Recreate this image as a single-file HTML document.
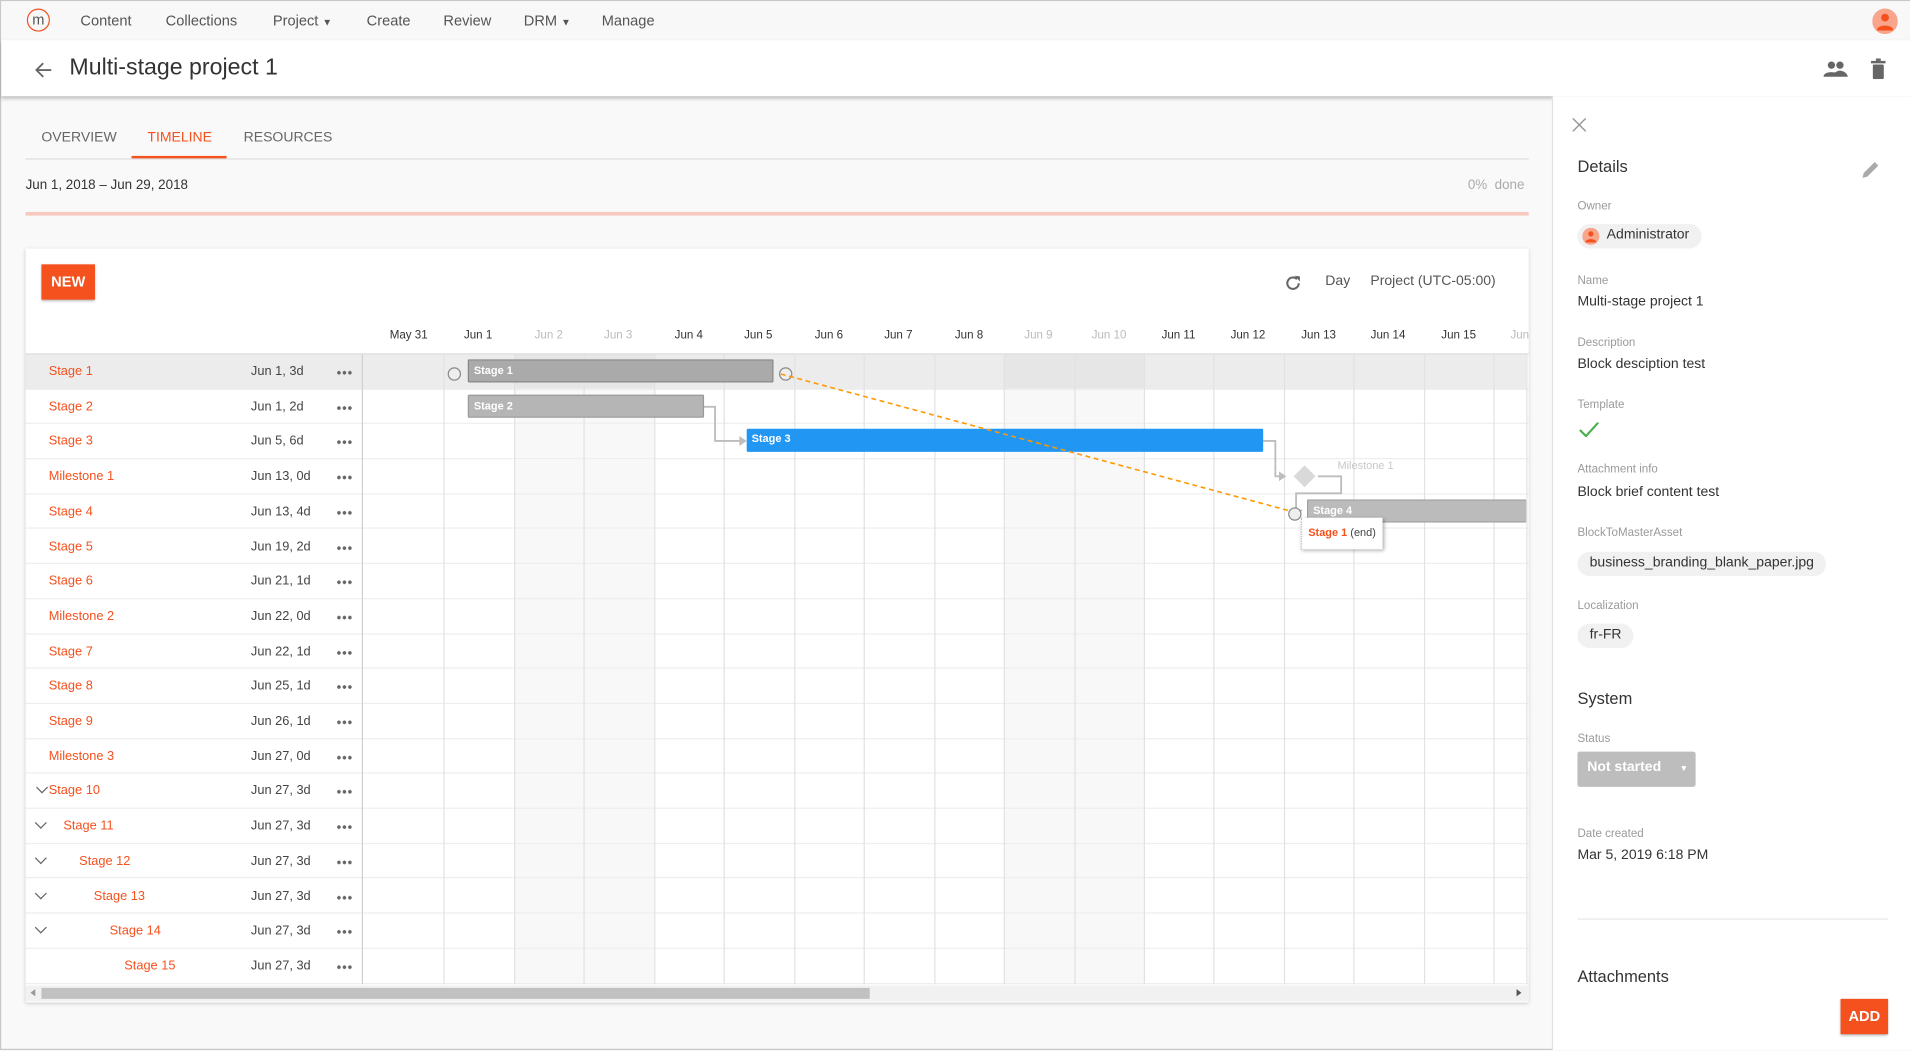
<!DOCTYPE html>
<html><head><meta charset="utf-8">
<style>
*{box-sizing:border-box;margin:0;padding:0}
html,body{width:1910px;height:1050px;overflow:hidden;background:#f9f9f9}
#w{position:absolute;left:0;top:0;width:1568px;height:862px;transform:scale(1.21811);transform-origin:0 0;font-family:"Liberation Sans",sans-serif;color:#333;background:#f9f9f9;border:1px solid #c8c8c8}
.a{position:absolute;white-space:nowrap}
.nav{font-size:12px;color:#555;top:9px}
.row{position:absolute;left:20px;width:1234px;height:28.7px;border-bottom:1px solid #eee}
.nm{position:absolute;top:8px;font-size:10.5px;color:#f4511e}
.dt{position:absolute;left:185px;top:8px;font-size:10.5px;color:#444}
.dots{position:absolute;left:255px;top:13px;width:13px;height:4px;background:radial-gradient(circle,#666 1.4px,transparent 1.6px) 0 0/4.5px 4px repeat-x}
.chev{position:absolute;left:9px;top:8px;width:7px;height:7px;border-right:1.6px solid #666;border-bottom:1.6px solid #666;transform:rotate(45deg)}
.lbl{position:absolute;left:1294px;font-size:9.5px;color:#9a9a9a}
.val{position:absolute;left:1294px;font-size:11.5px;color:#333}
.chip{position:absolute;left:1294px;height:20px;border-radius:10px;background:#f1f1f1;font-size:11.5px;padding:3px 10px;color:#333}
.dh{position:absolute;top:269px;font-size:9.5px;color:#333;width:57px;text-align:center}
.dh.g{color:#bbb}
.bar{position:absolute;height:19px;font-size:9px;font-weight:bold;color:#fff;padding:3px 4px;border-radius:1px}
</style></head><body><div id="w">
<div class="a" style="left:0;top:0;width:1568px;height:32px;background:#f8f8f8"></div>
<div class="a" style="left:21px;top:6px;width:19px;height:19px;border:1.3px solid #f4511e;border-radius:50%;font-size:12px;color:#555;text-align:center;line-height:16px">m</div>
<div class="a nav" style="left:65px">Content</div>
<div class="a nav" style="left:135px">Collections</div>
<div class="a nav" style="left:223px">Project <span style="font-size:8px">▼</span></div>
<div class="a nav" style="left:300px">Create</div>
<div class="a nav" style="left:363px">Review</div>
<div class="a nav" style="left:429px">DRM <span style="font-size:8px">▼</span></div>
<div class="a nav" style="left:493px">Manage</div>
<svg class="a" style="left:1536px;top:6px" width="21" height="21" viewBox="0 0 21 21"><circle cx="10.5" cy="10.5" r="10.5" fill="#f8a58c"/><circle cx="10.5" cy="7.5" r="3.2" fill="#f4511e"/><path d="M4 17c1-4 12-4 13 0v1H4z" fill="#f4511e"/></svg>
<div class="a" style="left:0;top:32px;width:1568px;height:46px;background:#fff;box-shadow:0 2px 3px rgba(0,0,0,.25)"></div>
<svg class="a" style="left:27px;top:49px" width="15" height="15" viewBox="0 0 16 16"><path d="M15 8H2M8 2L2 8l6 6" stroke="#666" stroke-width="1.6" fill="none"/></svg>
<div class="a" style="left:56px;top:44px;font-size:19px;color:#333">Multi-stage project 1</div>
<svg class="a" style="left:1495px;top:48px" width="22" height="16" viewBox="0 0 22 16"><circle cx="7.5" cy="4.5" r="3" fill="#666"/><circle cx="14.5" cy="4.5" r="3" fill="#666"/><path d="M1 14c0-5 13-5 13 0zM9 14c0-3 3-5 5.5-5s6 2 6.5 5z" fill="#666"/></svg>
<svg class="a" style="left:1535px;top:47px" width="12" height="17" viewBox="0 0 12 17"><rect x="0" y="2" width="12" height="2" fill="#666"/><rect x="4" y="0" width="4" height="2" fill="#666"/><rect x="1.5" y="5" width="9" height="12" rx="1" fill="#666"/></svg>
<div class="a" style="left:33px;top:106px;font-size:11.5px;color:#666">OVERVIEW</div>
<div class="a" style="left:120px;top:106px;font-size:11.5px;color:#f4511e">TIMELINE</div>
<div class="a" style="left:199px;top:106px;font-size:11.5px;color:#666">RESOURCES</div>
<div class="a" style="left:20px;top:129px;width:1234px;height:1px;background:#ddd"></div>
<div class="a" style="left:107px;top:127px;width:78px;height:2px;background:#f4511e"></div>
<div class="a" style="left:20px;top:145px;font-size:11px;color:#333">Jun 1, 2018 – Jun 29, 2018</div>
<div class="a" style="left:1204px;top:145px;font-size:11px;color:#aaa">0%&nbsp; done</div>
<div class="a" style="left:20px;top:173px;width:1234px;height:3px;background:#f5c9bd"></div>
<div class="a" style="left:20px;top:203px;width:1234px;height:619px;background:#fff;box-shadow:0 1px 3px rgba(0,0,0,.2)"></div>
<div class="a" style="left:33px;top:216px;width:44px;height:29px;background:#f4511e;color:#fff;font-weight:bold;font-size:12px;text-align:center;line-height:29px;box-shadow:0 1px 2px rgba(0,0,0,.3)">NEW</div>
<svg class="a" style="left:1053px;top:224px" width="15" height="15" viewBox="0 0 16 16"><path d="M13 8a5 5 0 1 1-1.5-3.6" stroke="#666" stroke-width="1.8" fill="none"/><path d="M9.5 1.5L14 2v4.5z" fill="#666"/></svg>
<div class="a" style="left:1087px;top:224px;font-size:11.5px;color:#555">Day</div>
<div class="a" style="left:1124px;top:224px;font-size:11.5px;color:#555">Project (UTC-05:00)</div>
<div class="a" style="left:421px;top:290px;width:115px;height:517px;background:#f8f8f8"></div>
<div class="a" style="left:823px;top:290px;width:115px;height:517px;background:#f8f8f8"></div>
<div class="a" style="left:20px;top:289px;width:1234px;height:1px;background:#ddd"></div>
<div class="a" style="left:20px;top:290px;width:1232px;height:28.7px;background:#ececec"></div>
<div class="a" style="left:421px;top:290px;width:115px;height:28.7px;background:#e6e6e6"></div>
<div class="a" style="left:823px;top:290px;width:115px;height:28.7px;background:#e6e6e6"></div>
<div class="dh" style="left:306px">May 31</div>
<div class="dh" style="left:363px">Jun 1</div>
<div class="dh g" style="left:421px">Jun 2</div>
<div class="dh g" style="left:478px">Jun 3</div>
<div class="dh" style="left:536px">Jun 4</div>
<div class="dh" style="left:593px">Jun 5</div>
<div class="dh" style="left:651px">Jun 6</div>
<div class="dh" style="left:708px">Jun 7</div>
<div class="dh" style="left:766px">Jun 8</div>
<div class="dh g" style="left:823px">Jun 9</div>
<div class="dh g" style="left:881px">Jun 10</div>
<div class="dh" style="left:938px">Jun 11</div>
<div class="dh" style="left:995px">Jun 12</div>
<div class="dh" style="left:1053px">Jun 13</div>
<div class="dh" style="left:1110px">Jun 14</div>
<div class="dh" style="left:1168px">Jun 15</div>
<div class="dh g" style="left:1225px;width:29px;overflow:hidden;text-align:left;padding-left:14px">Jun</div>
<div class="row" style="top:290px"><span class="nm" style="left:19px">Stage 1</span><span class="dt">Jun 1, 3d</span><span class="dots"></span></div>
<div class="row" style="top:318.7px"><span class="nm" style="left:19px">Stage 2</span><span class="dt">Jun 1, 2d</span><span class="dots"></span></div>
<div class="row" style="top:347.4px"><span class="nm" style="left:19px">Stage 3</span><span class="dt">Jun 5, 6d</span><span class="dots"></span></div>
<div class="row" style="top:376.1px"><span class="nm" style="left:19px">Milestone 1</span><span class="dt">Jun 13, 0d</span><span class="dots"></span></div>
<div class="row" style="top:404.8px"><span class="nm" style="left:19px">Stage 4</span><span class="dt">Jun 13, 4d</span><span class="dots"></span></div>
<div class="row" style="top:433.5px"><span class="nm" style="left:19px">Stage 5</span><span class="dt">Jun 19, 2d</span><span class="dots"></span></div>
<div class="row" style="top:462.2px"><span class="nm" style="left:19px">Stage 6</span><span class="dt">Jun 21, 1d</span><span class="dots"></span></div>
<div class="row" style="top:490.9px"><span class="nm" style="left:19px">Milestone 2</span><span class="dt">Jun 22, 0d</span><span class="dots"></span></div>
<div class="row" style="top:519.6px"><span class="nm" style="left:19px">Stage 7</span><span class="dt">Jun 22, 1d</span><span class="dots"></span></div>
<div class="row" style="top:548.3px"><span class="nm" style="left:19px">Stage 8</span><span class="dt">Jun 25, 1d</span><span class="dots"></span></div>
<div class="row" style="top:577px"><span class="nm" style="left:19px">Stage 9</span><span class="dt">Jun 26, 1d</span><span class="dots"></span></div>
<div class="row" style="top:605.7px"><span class="nm" style="left:19px">Milestone 3</span><span class="dt">Jun 27, 0d</span><span class="dots"></span></div>
<div class="row" style="top:634.4px"><span class="chev" style="left:10px"></span><span class="nm" style="left:19px">Stage 10</span><span class="dt">Jun 27, 3d</span><span class="dots"></span></div>
<div class="row" style="top:663.1px"><span class="chev"></span><span class="nm" style="left:31px">Stage 11</span><span class="dt">Jun 27, 3d</span><span class="dots"></span></div>
<div class="row" style="top:691.8px"><span class="chev"></span><span class="nm" style="left:44px">Stage 12</span><span class="dt">Jun 27, 3d</span><span class="dots"></span></div>
<div class="row" style="top:720.5px"><span class="chev"></span><span class="nm" style="left:56px">Stage 13</span><span class="dt">Jun 27, 3d</span><span class="dots"></span></div>
<div class="row" style="top:749.2px"><span class="chev"></span><span class="nm" style="left:69px">Stage 14</span><span class="dt">Jun 27, 3d</span><span class="dots"></span></div>
<div class="row" style="top:777.9px"><span class="nm" style="left:81px">Stage 15</span><span class="dt">Jun 27, 3d</span><span class="dots"></span></div>
<svg class="a" style="left:0;top:0" width="1568" height="862">
<g stroke="#e2e2e2" stroke-width="1">
<line x1="363.5" y1="290" x2="363.5" y2="807"/><line x1="421.5" y1="290" x2="421.5" y2="807"/><line x1="478.5" y1="290" x2="478.5" y2="807"/><line x1="536.5" y1="290" x2="536.5" y2="807"/><line x1="593.5" y1="290" x2="593.5" y2="807"/><line x1="651.5" y1="290" x2="651.5" y2="807"/><line x1="708.5" y1="290" x2="708.5" y2="807"/><line x1="766.5" y1="290" x2="766.5" y2="807"/><line x1="823.5" y1="290" x2="823.5" y2="807"/><line x1="881.5" y1="290" x2="881.5" y2="807"/><line x1="938.5" y1="290" x2="938.5" y2="807"/><line x1="995.5" y1="290" x2="995.5" y2="807"/><line x1="1053.5" y1="290" x2="1053.5" y2="807"/><line x1="1110.5" y1="290" x2="1110.5" y2="807"/><line x1="1168.5" y1="290" x2="1168.5" y2="807"/><line x1="1225.5" y1="290" x2="1225.5" y2="807"/>
</g>
<line x1="296.5" y1="290" x2="296.5" y2="807" stroke="#d0d0d0"/>
<line x1="1252.5" y1="290" x2="1252.5" y2="807" stroke="#e2e2e2"/>
<g stroke="#bdbdbd" stroke-width="1.5" fill="none">
<path d="M576 333H586V361H607"/><path d="M1036 361H1046V390H1052"/><path d="M1081 390H1100V404H1063V418H1068"/>
</g>
<path d="M606 357l6 4-6 4z M1049 386l6 4-6 4z" fill="#bdbdbd"/>
</svg>
<div class="bar" style="left:383px;top:294px;width:251px;background:#aaa;border:1px solid #888">Stage 1</div>
<div class="bar" style="left:383px;top:323px;width:194px;background:#b5b5b5;border:1px solid #999">Stage 2</div>
<div class="bar" style="left:612px;top:351px;width:424px;background:#2196f3">Stage 3</div>
<div class="bar" style="left:1072px;top:409px;width:180px;background:#bbb;border:1px solid #999;border-right:none">Stage 4</div>
<div class="a" style="left:1097px;top:376px;font-size:9px;color:#c8c8c8">Milestone 1</div>
<svg class="a" style="left:0;top:0" width="1568" height="862">
<path d="M1070 381l9 9-9 9-9-9z" fill="#d9d9d9"/>
<circle cx="372" cy="306" r="5" fill="#eee" stroke="#888"/>
<circle cx="644" cy="306" r="5" fill="#eee" stroke="#888"/>
<line x1="640" y1="306" x2="1060" y2="419" stroke="#ff9800" stroke-width="1.3" stroke-dasharray="4 3"/>
<circle cx="1062" cy="421" r="5" fill="#eee" stroke="#888"/>
</svg>
<div class="a" style="left:1067px;top:424px;width:67px;height:26px;background:#fff;box-shadow:1px 1px 3px rgba(0,0,0,.35);font-size:9px;padding:7px 5px;color:#444;border-left:1px dotted #bbb"><b style="color:#f4511e">Stage 1</b> (end)</div>
<div class="a" style="left:20px;top:808px;width:1234px;height:13px;background:#f1f1f1"></div>
<div class="a" style="left:33px;top:810px;width:680px;height:9px;background:#c1c1c1"></div>
<div class="a" style="left:24px;top:811px;width:0;height:0;border:3px solid transparent;border-right:4px solid #999;border-left:none"></div>
<div class="a" style="left:1244px;top:811px;width:0;height:0;border:3px solid transparent;border-left:4px solid #555;border-right:none"></div>
<div class="a" style="left:1273px;top:78px;width:294px;height:783px;background:#fff;border-left:1px solid #e0e0e0"></div>
<svg class="a" style="left:1290px;top:96px" width="11" height="11" viewBox="0 0 11 11"><path d="M0 0L11 11M11 0L0 11" stroke="#999" stroke-width="1.2"/></svg>
<div class="a" style="left:1294px;top:128px;font-size:13.5px;color:#333">Details</div>
<svg class="a" style="left:1527px;top:130px" width="16" height="16" viewBox="0 0 16 16"><path d="M1 15l1-4 9-9 3 3-9 9z" fill="#aaa"/></svg>
<div class="lbl" style="top:163px">Owner</div>
<div class="chip" style="top:183px;padding-left:24px">Administrator</div>
<svg class="a" style="left:1298px;top:186px" width="14" height="14" viewBox="0 0 21 21"><circle cx="10.5" cy="10.5" r="10.5" fill="#f8a58c"/><circle cx="10.5" cy="7.5" r="3.2" fill="#f4511e"/><path d="M4 17c1-4 12-4 13 0v1H4z" fill="#f4511e"/></svg>
<div class="lbl" style="top:224px">Name</div>
<div class="val" style="top:241px">Multi-stage project 1</div>
<div class="lbl" style="top:275px">Description</div>
<div class="val" style="top:292px">Block desciption test</div>
<div class="lbl" style="top:326px">Template</div>
<svg class="a" style="left:1295px;top:345px" width="17" height="13" viewBox="0 0 17 13"><path d="M1 7l5 5L16 1" stroke="#4caf50" stroke-width="1.8" fill="none"/></svg>
<div class="lbl" style="top:379px">Attachment info</div>
<div class="val" style="top:397px">Block brief content test</div>
<div class="lbl" style="top:431px">BlockToMasterAsset</div>
<div class="chip" style="top:452px">business_branding_blank_paper.jpg</div>
<div class="lbl" style="top:491px">Localization</div>
<div class="chip" style="top:511px">fr-FR</div>
<div class="a" style="left:1294px;top:565px;font-size:13.5px;color:#333">System</div>
<div class="lbl" style="top:600px">Status</div>
<div class="a" style="left:1294px;top:616px;width:97px;height:29px;background:#bdbdbd;border-radius:2px;color:#fff;font-weight:bold;font-size:11.5px;padding:7px 8px">Not started <span style="font-size:7px;margin-left:12px">▼</span></div>
<div class="lbl" style="top:678px">Date created</div>
<div class="val" style="top:695px">Mar 5, 2019 6:18 PM</div>
<div class="a" style="left:1294px;top:753px;width:255px;height:1px;background:#e6e6e6"></div>
<div class="a" style="left:1294px;top:793px;font-size:13.5px;color:#333">Attachments</div>
<div class="a" style="left:1510px;top:819px;width:39px;height:29px;background:#f4511e;color:#fff;font-weight:bold;font-size:12px;text-align:center;line-height:29px;box-shadow:0 1px 2px rgba(0,0,0,.3)">ADD</div>
</div></body></html>
